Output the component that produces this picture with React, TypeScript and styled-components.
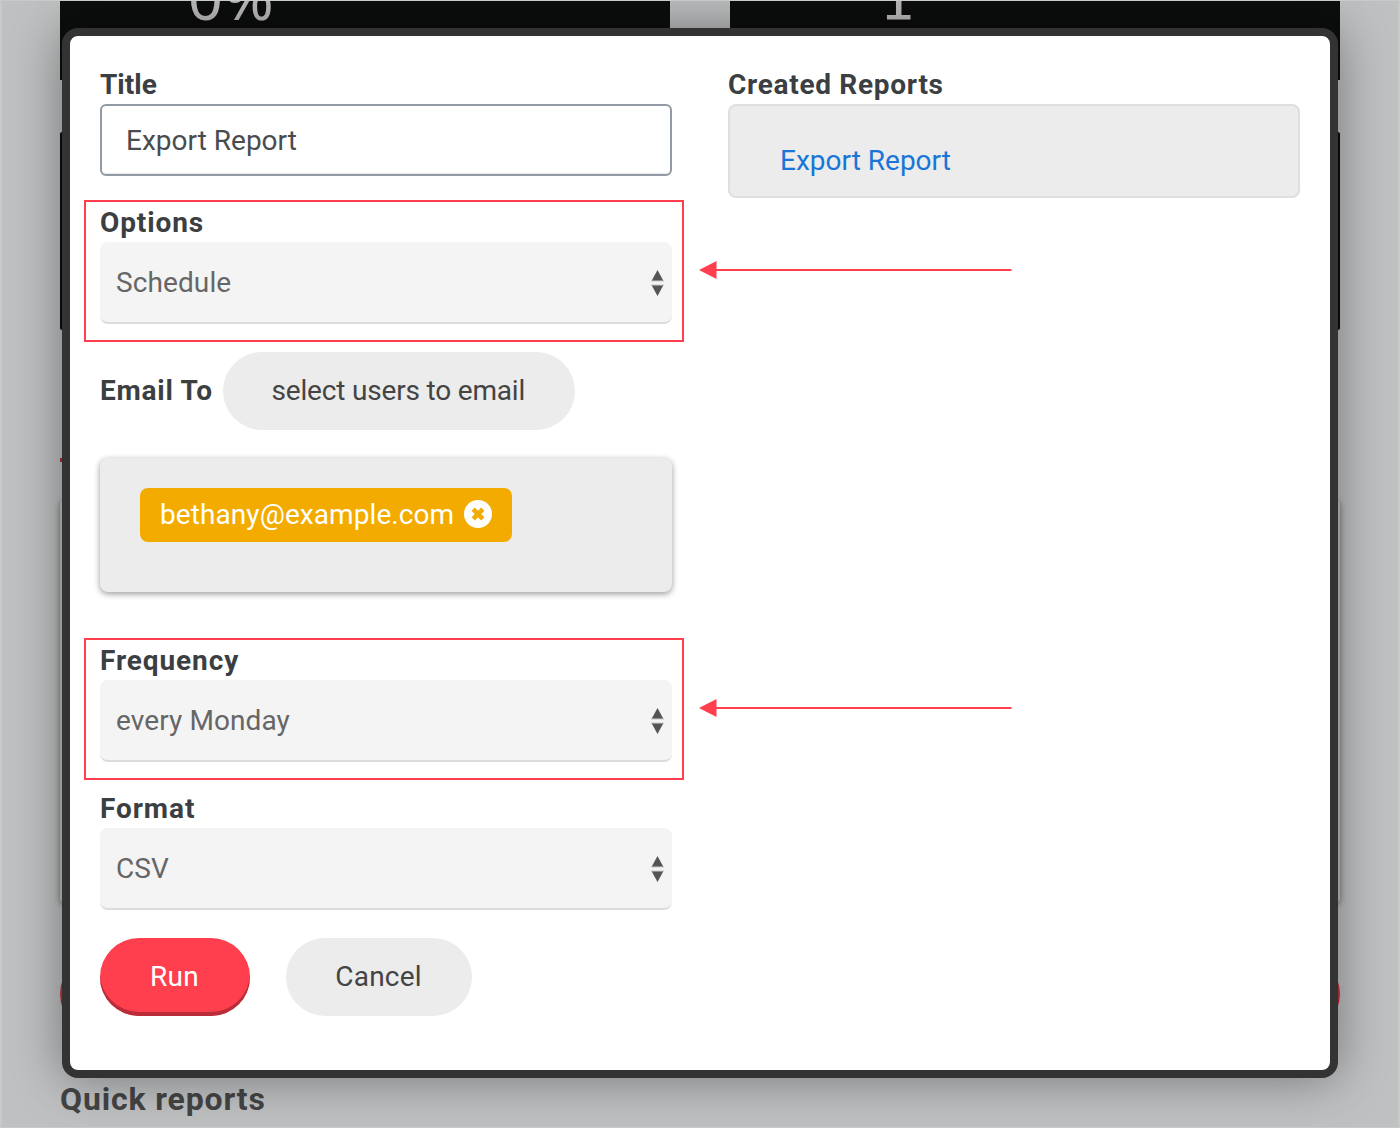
import React from 'react';
import styled, { createGlobalStyle } from 'styled-components';

const GlobalStyle = createGlobalStyle`
  * {
    box-sizing: border-box;
  }

  body {
    margin: 0;
    font-family: Roboto, 'Liberation Sans', sans-serif;
    font-size: 28px;
    color: #3b3f42;
  }

  button, input {
    font: inherit;
    letter-spacing: inherit;
  }
`;

// dimmed dashboard behind the modal
const Page = styled.div`
  position: relative;
  width: 1400px;
  height: 1128px;
  overflow: hidden;
  background-color: #bec0c1;
  border: solid #c8cac9;
  border-width: 1px 2px;
`;

const Dashboard = styled.main`
  padding: 0 58px;
`;

const Stats = styled.div`
  display: grid;
  grid-template-columns: 1fr 1fr;
  gap: 60px;
`;

const Stat = styled.div<{ $indent: number }>`
  height: 79px;
  padding-left: ${({ $indent }) => $indent}px;
  background-color: #0c0d0d;
  color: #bdbdbd;
  line-height: 56px;
`;

const StatValue = styled.div<{ $serif?: boolean }>`
  margin-top: ${({ $serif }) => ($serif ? -29 : -32)}px;
  font-family: ${({ $serif }) => ($serif ? "'DejaVu Sans'" : "'Noto Sans'")}, sans-serif;
  font-size: ${({ $serif }) => ($serif ? 56 : 61)}px;
`;

const Summary = styled.div`
  height: 198px;
  margin-top: 52px;
  border-radius: 2px;
  background-color: #0c0d0d;
`;

const RedLine = styled.div`
  width: 400px;
  height: 4px;
  margin-top: 128px;
  background-color: #b02a35;
`;

const Panel = styled.div`
  height: 402px;
  margin-top: 38px;
  border-radius: 4px;
  background-color: #bec0c1;
  box-shadow: 0 2px 6px rgba(0, 0, 0, 0.4);
`;

const RedButton = styled.div`
  height: 78px;
  margin-top: 53px;
  border-radius: 39px;
  background-color: #c52f3b;
`;

const SectionTitle = styled.h2`
  margin: 46px 0 0;
  font-size: 32px;
  line-height: 40px;
  letter-spacing: 0.85px;
  color: #444;
`;

const Overlay = styled.div`
  position: absolute;
  inset: 0;
  display: flex;
  justify-content: center;
  align-items: flex-start;
  padding-top: 27px;
`;

const Modal = styled.div`
  display: grid;
  grid-template-columns: 572px 572px;
  justify-content: space-between;
  align-items: start;
  width: 1276px;
  height: 1050px;
  padding: 28px 30px;
  border: 8px solid #333;
  border-radius: 16px;
  background-color: #fff;
  box-shadow: 0 0 50px rgba(0, 0, 0, 0.4);
`;

const Field = styled.div<{ $top?: number }>`
  position: relative;
  margin-top: ${({ $top = 0 }) => $top}px;
`;

const Label = styled.label<{ $spacing?: number }>`
  display: block;
  height: 40px;
  font-weight: bold;
  line-height: 42px;
  letter-spacing: ${({ $spacing = 0.9 }) => $spacing}px;
`;

const TextInput = styled.input`
  display: block;
  width: 100%;
  height: 72px;
  padding: 0 24px;
  border: 2px solid #929ba5;
  border-radius: 6px;
  color: #494c4f;
  box-shadow: inset 0 -1px 0 #e8e8e8;
`;

const SelectBox = styled.div`
  display: flex;
  justify-content: space-between;
  align-items: center;
  height: 82px;
  padding: 0 8px 0 16px;
  border-bottom: 2px solid #dcdcdc;
  border-radius: 8px;
  background-color: #f4f4f4;
  color: #666;
  letter-spacing: 0.1px;
`;

const SortIcon = styled.svg`
  margin-top: 2px;
`;

const EmailRow = styled.div`
  display: flex;
  align-items: center;
  gap: 10px;
  margin-top: 28px;

  ${Label} {
    line-height: 40px;
  }
`;

const Pill = styled.button<{ $width: number; $primary?: boolean; $spacing?: number }>`
  width: ${({ $width }) => $width}px;
  height: 78px;
  padding: 0 1px 2px 0;
  border: none;
  border-radius: 39px;
  background-color: ${({ $primary }) => ($primary ? '#ff3f4e' : '#ececec')};
  color: ${({ $primary }) => ($primary ? '#fff' : '#444')};
  letter-spacing: ${({ $spacing = 0.2 }) => $spacing}px;
  box-shadow: ${({ $primary }) => ($primary ? 'inset 0 -4px 0 #b92d39' : 'none')};
`;

const Recipients = styled.div`
  height: 134px;
  margin: 28px 0 48px;
  padding: 30px 40px;
  border-radius: 8px;
  background-color: #ececec;
  box-shadow: 0 2px 6px rgba(0, 0, 0, 0.4);
`;

const Chip = styled.span`
  display: flex;
  align-items: center;
  justify-content: space-between;
  width: 372px;
  height: 54px;
  padding: 0 20px 2px;
  border-radius: 8px;
  background-color: #f4ab00;
  color: #fff;
  letter-spacing: 0.08px;
`;

const Actions = styled.div`
  display: flex;
  gap: 36px;
  margin-top: 28px;
`;

const ReportList = styled.div`
  height: 94px;
  padding: 36px 50px 0;
  border: 2px solid #dfdfdf;
  border-radius: 8px;
  background-color: #ececec;
  line-height: 38px;
`;

const ReportLink = styled.a`
  color: #1976d8;
`;

// red box and arrow drawn over a field
const Frame = styled.div`
  position: absolute;
  top: -2px;
  left: -16px;
  width: 600px;
  height: 142px;
  border: 2px solid #ff3f4e;
`;

const Arrow = styled.svg`
  position: absolute;
  top: 58px;
  left: 598px;
`;

const Highlight = () => (
  <>
    <Frame />
    <Arrow width="314" height="20" viewBox="0 0 314 20" fill="#ff3f4e">
      <path d="M1 10 18.5 1v18z" />
      <rect x="18" y="9" width="295.5" height="2" />
    </Arrow>
  </>
);

interface SelectFieldProps {
  label: string;
  value: string;
  top?: number;
  highlighted?: boolean;
}

const SelectField: React.FC<SelectFieldProps> = ({ label, value, top, highlighted }) => (
  <Field $top={top}>
    <Label>{label}</Label>
    <SelectBox>
      {value}
      <SortIcon width="13" height="26" viewBox="0 0 13 26">
        <path d="M6.5 0 12.5 11H.5zM6.5 26 .5 15h12z" fill="#555" />
        <path d="M0 11h13M0 15h13" stroke="#ccc" />
      </SortIcon>
    </SelectBox>
    {highlighted && <Highlight />}
  </Field>
);

const App: React.FC = () => (
  <Page>
    <GlobalStyle />
    <Dashboard>
      <Stats>
        <Stat $indent={128}>
          <StatValue>0%</StatValue>
        </Stat>
        <Stat $indent={150}>
          <StatValue $serif>1</StatValue>
        </Stat>
      </Stats>
      <Summary />
      <RedLine />
      <Panel />
      <RedButton />
      <SectionTitle>Quick reports</SectionTitle>
    </Dashboard>

    <Overlay>
      <Modal>
        <div>
          <Field>
            <Label $spacing={0}>Title</Label>
            <TextInput defaultValue="Export Report" />
          </Field>
          <SelectField label="Options" value="Schedule" top={26} highlighted />
          <EmailRow>
            <Label $spacing={0.75}>Email To</Label>
            <Pill $width={352} $spacing={-0.18}>
              select users to email
            </Pill>
          </EmailRow>
          <Recipients>
            <Chip>
              bethany@example.com
              <svg width="28" height="28" viewBox="0 0 28 28">
                <circle cx="14" cy="14" r="14" fill="#fff" />
                <path d="m9.2 9.2 9.6 9.6m0-9.6-9.6 9.6" stroke="#f4ab00" strokeWidth="4.6" />
              </svg>
            </Chip>
          </Recipients>
          <SelectField label="Frequency" value="every Monday" highlighted />
          <SelectField label="Format" value="CSV" top={26} />
          <Actions>
            <Pill $width={150} $primary>
              Run
            </Pill>
            <Pill $width={186}>Cancel</Pill>
          </Actions>
        </div>
        <div>
          <Label $spacing={0.7}>Created Reports</Label>
          <ReportList>
            <ReportLink>Export Report</ReportLink>
          </ReportList>
        </div>
      </Modal>
    </Overlay>
  </Page>
);

export default App;
